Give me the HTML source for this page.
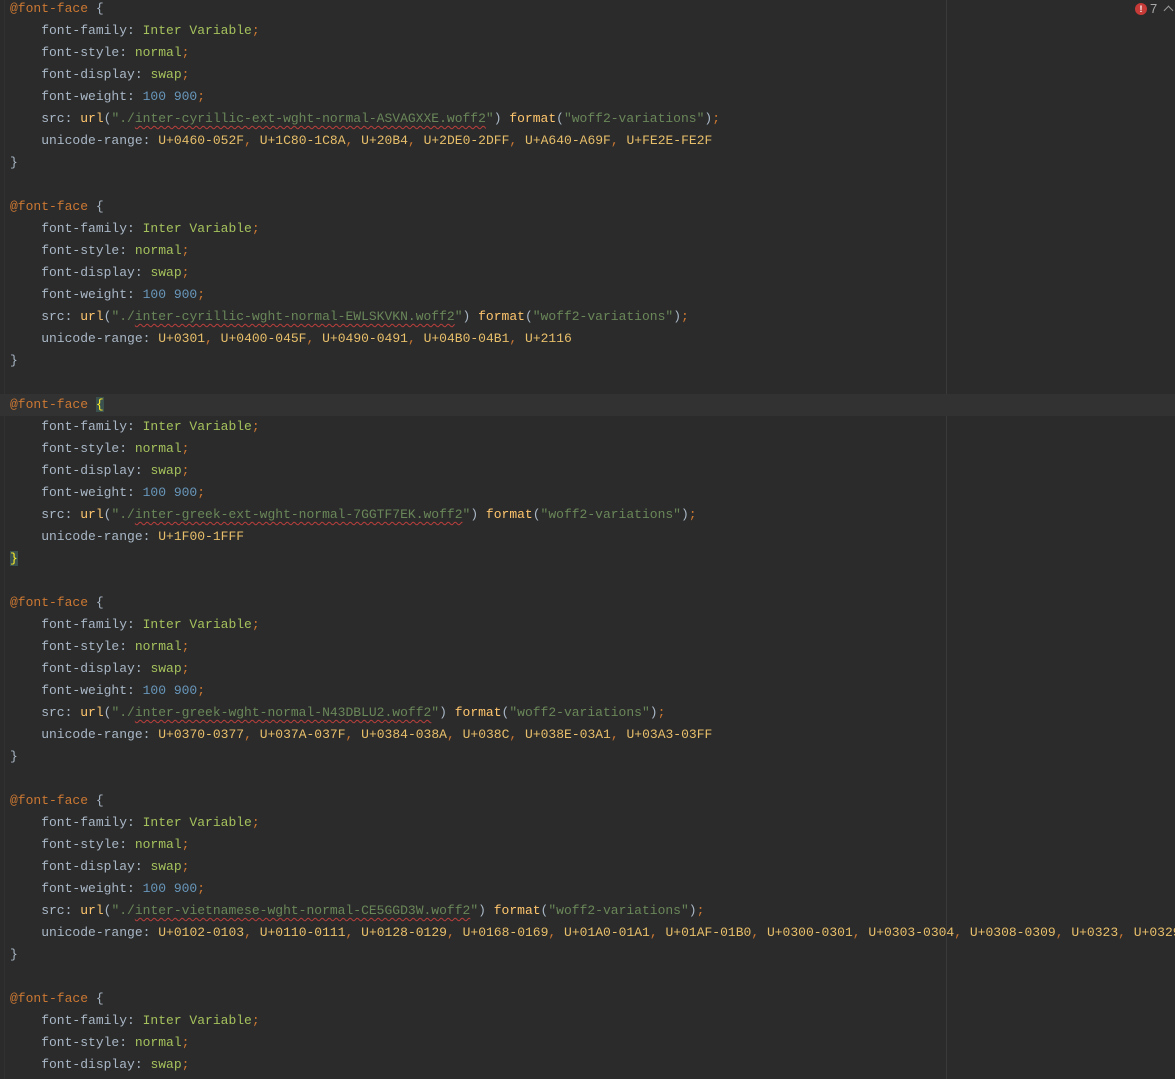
<!DOCTYPE html>
<html><head><meta charset="utf-8"><style>
html,body{margin:0;padding:0;background:#2b2b2b;width:1175px;height:1079px;overflow:hidden}
.ed{position:absolute;left:0;top:-2px;width:1175px}
.l{height:22px;line-height:22px;font-family:"Liberation Mono",monospace;font-size:13px;color:#a9b7c6;white-space:pre;padding-left:10px}
.cur{background:#323232}
.a{color:#cc7832}.p{color:#a9b7c6}.v{color:#a5c25c}.n{color:#6897bb}.f{color:#ffc66d}.s{color:#6a8759}.u{color:#e8bf6a}
.w{text-decoration:underline wavy #bc3f3c;text-decoration-thickness:1px;text-underline-offset:3px}
.bh{background:#3b514d;color:#ffef28}
.vl{position:absolute;left:946px;top:0;width:1px;height:1079px;background:#3a3a3a}
.gut{position:absolute;left:4px;top:0;width:1px;height:1079px;background:#313131}
.err{position:absolute;left:1135px;top:3px;width:12px;height:12px;border-radius:50%;background:#c63a37;color:#fff;font:bold 9px "Liberation Sans",sans-serif;text-align:center;line-height:12px}
.cnt{position:absolute;left:1150px;top:1px;font:13px "Liberation Sans",sans-serif;color:#a9a9a9}
.chev{position:absolute;left:1165px;top:7px;width:6px;height:6px;border-left:1.2px solid #999;border-top:1.2px solid #999;transform:rotate(45deg)}
</style></head><body>
<div class="gut"></div>
<div class="vl"></div>
<div class="ed">
<div class="l"><span class="a">@font-face</span> {</div>
<div class="l">    font-family: <span class="v">Inter Variable</span><span class="a">;</span></div>
<div class="l">    font-style: <span class="v">normal</span><span class="a">;</span></div>
<div class="l">    font-display: <span class="v">swap</span><span class="a">;</span></div>
<div class="l">    font-weight: <span class="n">100 900</span><span class="a">;</span></div>
<div class="l">    src: <span class="f">url</span>(<span class="s">"./<span class="w">inter-cyrillic-ext-wght-normal-ASVAGXXE.woff2</span>"</span>) <span class="f">format</span>(<span class="s">"woff2-variations"</span>)<span class="a">;</span></div>
<div class="l">    unicode-range: <span class="u">U+0460-052F</span><span class="a">,</span> <span class="u">U+1C80-1C8A</span><span class="a">,</span> <span class="u">U+20B4</span><span class="a">,</span> <span class="u">U+2DE0-2DFF</span><span class="a">,</span> <span class="u">U+A640-A69F</span><span class="a">,</span> <span class="u">U+FE2E-FE2F</span></div>
<div class="l">}</div>
<div class="l"> </div>
<div class="l"><span class="a">@font-face</span> {</div>
<div class="l">    font-family: <span class="v">Inter Variable</span><span class="a">;</span></div>
<div class="l">    font-style: <span class="v">normal</span><span class="a">;</span></div>
<div class="l">    font-display: <span class="v">swap</span><span class="a">;</span></div>
<div class="l">    font-weight: <span class="n">100 900</span><span class="a">;</span></div>
<div class="l">    src: <span class="f">url</span>(<span class="s">"./<span class="w">inter-cyrillic-wght-normal-EWLSKVKN.woff2</span>"</span>) <span class="f">format</span>(<span class="s">"woff2-variations"</span>)<span class="a">;</span></div>
<div class="l">    unicode-range: <span class="u">U+0301</span><span class="a">,</span> <span class="u">U+0400-045F</span><span class="a">,</span> <span class="u">U+0490-0491</span><span class="a">,</span> <span class="u">U+04B0-04B1</span><span class="a">,</span> <span class="u">U+2116</span></div>
<div class="l">}</div>
<div class="l"> </div>
<div class="l cur"><span class="a">@font-face</span> <span class="bh">{</span></div>
<div class="l">    font-family: <span class="v">Inter Variable</span><span class="a">;</span></div>
<div class="l">    font-style: <span class="v">normal</span><span class="a">;</span></div>
<div class="l">    font-display: <span class="v">swap</span><span class="a">;</span></div>
<div class="l">    font-weight: <span class="n">100 900</span><span class="a">;</span></div>
<div class="l">    src: <span class="f">url</span>(<span class="s">"./<span class="w">inter-greek-ext-wght-normal-7GGTF7EK.woff2</span>"</span>) <span class="f">format</span>(<span class="s">"woff2-variations"</span>)<span class="a">;</span></div>
<div class="l">    unicode-range: <span class="u">U+1F00-1FFF</span></div>
<div class="l"><span class="bh">}</span></div>
<div class="l"> </div>
<div class="l"><span class="a">@font-face</span> {</div>
<div class="l">    font-family: <span class="v">Inter Variable</span><span class="a">;</span></div>
<div class="l">    font-style: <span class="v">normal</span><span class="a">;</span></div>
<div class="l">    font-display: <span class="v">swap</span><span class="a">;</span></div>
<div class="l">    font-weight: <span class="n">100 900</span><span class="a">;</span></div>
<div class="l">    src: <span class="f">url</span>(<span class="s">"./<span class="w">inter-greek-wght-normal-N43DBLU2.woff2</span>"</span>) <span class="f">format</span>(<span class="s">"woff2-variations"</span>)<span class="a">;</span></div>
<div class="l">    unicode-range: <span class="u">U+0370-0377</span><span class="a">,</span> <span class="u">U+037A-037F</span><span class="a">,</span> <span class="u">U+0384-038A</span><span class="a">,</span> <span class="u">U+038C</span><span class="a">,</span> <span class="u">U+038E-03A1</span><span class="a">,</span> <span class="u">U+03A3-03FF</span></div>
<div class="l">}</div>
<div class="l"> </div>
<div class="l"><span class="a">@font-face</span> {</div>
<div class="l">    font-family: <span class="v">Inter Variable</span><span class="a">;</span></div>
<div class="l">    font-style: <span class="v">normal</span><span class="a">;</span></div>
<div class="l">    font-display: <span class="v">swap</span><span class="a">;</span></div>
<div class="l">    font-weight: <span class="n">100 900</span><span class="a">;</span></div>
<div class="l">    src: <span class="f">url</span>(<span class="s">"./<span class="w">inter-vietnamese-wght-normal-CE5GGD3W.woff2</span>"</span>) <span class="f">format</span>(<span class="s">"woff2-variations"</span>)<span class="a">;</span></div>
<div class="l">    unicode-range: <span class="u">U+0102-0103</span><span class="a">,</span> <span class="u">U+0110-0111</span><span class="a">,</span> <span class="u">U+0128-0129</span><span class="a">,</span> <span class="u">U+0168-0169</span><span class="a">,</span> <span class="u">U+01A0-01A1</span><span class="a">,</span> <span class="u">U+01AF-01B0</span><span class="a">,</span> <span class="u">U+0300-0301</span><span class="a">,</span> <span class="u">U+0303-0304</span><span class="a">,</span> <span class="u">U+0308-0309</span><span class="a">,</span> <span class="u">U+0323</span><span class="a">,</span> <span class="u">U+0329</span></div>
<div class="l">}</div>
<div class="l"> </div>
<div class="l"><span class="a">@font-face</span> {</div>
<div class="l">    font-family: <span class="v">Inter Variable</span><span class="a">;</span></div>
<div class="l">    font-style: <span class="v">normal</span><span class="a">;</span></div>
<div class="l">    font-display: <span class="v">swap</span><span class="a">;</span></div>
</div>
<div class="err">!</div>
<div class="cnt">7</div>
<div class="chev"></div>
</body></html>
